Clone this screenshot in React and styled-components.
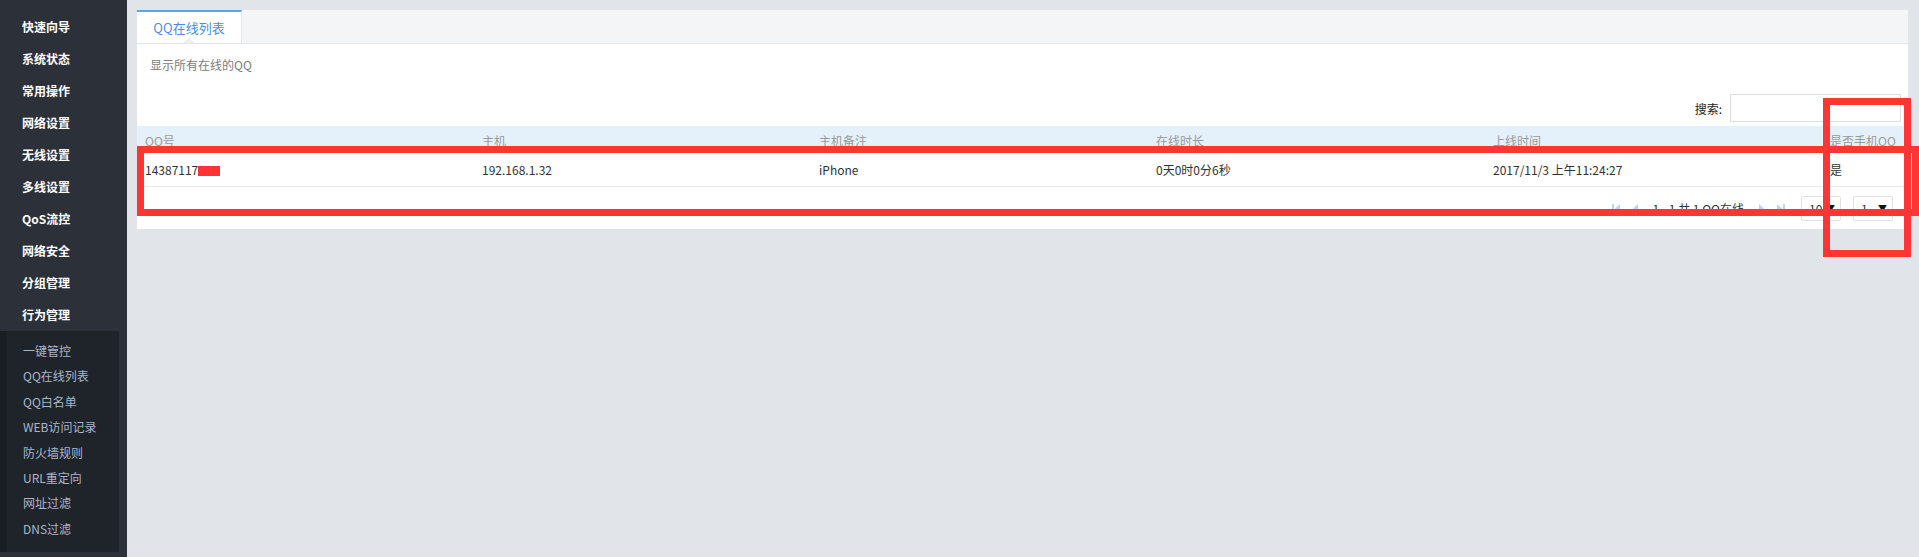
import React from 'react';
import styled, { createGlobalStyle } from 'styled-components';

const GlobalStyle = createGlobalStyle`
  html, body { margin: 0; padding: 0; }
  body {
    font-family: "Noto Sans CJK SC", "Noto Sans", "Liberation Sans", sans-serif;
    font-size: 12px;
    background: #e1e4e8;
    color: #333;
  }
`;

const Page = styled.div`
  position: relative;
  display: flex;
  height: 557px;
  overflow: hidden;
`;

const Sidebar = styled.nav`
  width: 127px;
  flex: none;
  background: #2b3039;
  padding-top: 11px;
  box-sizing: border-box;
`;

const NavItem = styled.div`
  height: 32px;
  line-height: 32px;
  padding-left: 22px;
  color: #fff;
  font-size: 12px;
  font-weight: 700;
`;

const SubMenu = styled.div`
  width: 112px;
  border-left: 7px solid #1a1d21;
  background: #1f232a;
  padding: 7px 0 11px;
`;

const SubItem = styled.div`
  height: 25.4px;
  line-height: 25.4px;
  padding-left: 16px;
  color: #a9b7ca;
  font-size: 12px;
  white-space: nowrap;
`;

const Main = styled.main`
  flex: 1;
  padding: 10px 11px 0 10px;
  min-width: 0;
`;

const Panel = styled.section`
  background: #fff;
`;

const TabBar = styled.div`
  display: flex;
  height: 34px;
  background: #f4f5f7;
  border-bottom: 1px solid #e3e5e8;
  box-sizing: border-box;
`;

const Tab = styled.div`
  position: relative;
  width: 105px;
  box-sizing: border-box;
  background: #fff;
  border-top: 2px solid #5ca7ea;
  border-right: 1px solid #e3e5e8;
  color: #4a8ee0;
  font-size: 13px;
  text-align: center;
  line-height: 31px;

  &::after {
    content: "";
    position: absolute;
    left: 50%;
    bottom: 0;
    margin-left: -6px;
    border-left: 6px solid transparent;
    border-right: 6px solid transparent;
    border-bottom: 5px solid #eceef1;
  }
`;

const Desc = styled.div`
  padding: 13px 13px 0;
  line-height: 16px;
  color: #7b7b7b;
`;

const Toolbar = styled.div`
  display: flex;
  justify-content: flex-end;
  align-items: center;
  gap: 8px;
  margin-top: 21px;
  padding-right: 7px;
`;

const Label = styled.span`
  color: #222;
`;

const SearchInput = styled.input`
  width: 171px;
  height: 28px;
  box-sizing: border-box;
  border: 1px solid #dcdfe4;
  outline: none;
  font: inherit;
  padding: 0 6px;
`;

const Table = styled.div`
  margin-top: 4px;
`;

const Row = styled.div`
  display: grid;
  grid-template-columns: repeat(5, 1fr) 86px;
`;

const HeadRow = styled(Row)`
  height: 25px;
  align-items: end;
  background: #e5f1fa;
`;

const HeadCell = styled.div`
  padding-left: 8px;
  line-height: 20px;
  color: #999;
  white-space: nowrap;
`;

const DataRow = styled(Row)`
  height: 35px;
  border-bottom: 1px solid #ececec;
`;

const Cell = styled.div`
  padding: 3px 0 0 8px;
  line-height: 32px;
  color: #333;
  white-space: nowrap;
`;

const Redact = styled.span`
  display: inline-block;
  width: 22px;
  height: 10px;
  background: #ff3333;
  vertical-align: -1px;
`;

const Pager = styled.div`
  display: flex;
  justify-content: flex-end;
  align-items: center;
  height: 42px;
  padding-right: 15px;
  gap: 12px;
`;

const PageIcon = styled.svg`
  width: 8px;
  height: 9px;
  fill: #c3d3e8;
  flex: none;
`;

const PageText = styled.span`
  color: #333;
  white-space: nowrap;
  margin: 0 1px;
`;

const Selects = styled.div`
  display: flex;
  gap: 12px;
  margin-left: 4px;
`;

const Select = styled.div`
  width: 40px;
  height: 25px;
  box-sizing: border-box;
  border: 1px solid #dfe2e6;
  border-radius: 2px;
  display: flex;
  align-items: center;
  justify-content: space-between;
  padding: 0 5px 0 7px;
  color: #333;
`;

const Caret = styled.span`
  font-size: 9px;
  color: #111;
`;

const Mark = styled.div`
  position: absolute;
  box-sizing: border-box;
  border: 7px solid #fd3535;
  pointer-events: none;
`;

const navItems = ['快速向导', '系统状态', '常用操作', '网络设置', '无线设置', '多线设置', 'QoS流控', '网络安全', '分组管理', '行为管理'];
const subItems = ['一键管控', 'QQ在线列表', 'QQ白名单', 'WEB访问记录', '防火墙规则', 'URL重定向', '网址过滤', 'DNS过滤'];
const heads = ['QQ号', '主机', '主机备注', '在线时长', '上线时间', '是否手机QQ'];

export default function App() {
  return (
    <Page>
      <GlobalStyle />
      <Sidebar>
        {navItems.map((n) => <NavItem key={n}>{n}</NavItem>)}
        <SubMenu>
          {subItems.map((n) => <SubItem key={n}>{n}</SubItem>)}
        </SubMenu>
      </Sidebar>
      <Main>
        <Panel>
          <TabBar>
            <Tab>QQ在线列表</Tab>
          </TabBar>
          <Desc>显示所有在线的QQ</Desc>
          <Toolbar>
            <Label>搜索:</Label>
            <SearchInput />
          </Toolbar>
          <Table>
            <HeadRow>
              {heads.map((h) => <HeadCell key={h}>{h}</HeadCell>)}
            </HeadRow>
            <DataRow>
              <Cell>14387117<Redact /></Cell>
              <Cell>192.168.1.32</Cell>
              <Cell>iPhone</Cell>
              <Cell>0天0时0分6秒</Cell>
              <Cell>2017/11/3 上午11:24:27</Cell>
              <Cell>是</Cell>
            </DataRow>
          </Table>
          <Pager>
            <PageIcon viewBox="0 0 8 9"><rect x="0" y="0" width="2" height="9" /><path d="M8 0 L3 4.5 L8 9 Z" /></PageIcon>
            <PageIcon viewBox="0 0 8 9"><path d="M6 0 L1 4.5 L6 9 Z" /></PageIcon>
            <PageText>1 - 1 共 1 QQ在线</PageText>
            <PageIcon viewBox="0 0 8 9"><path d="M2 0 L7 4.5 L2 9 Z" /></PageIcon>
            <PageIcon viewBox="0 0 8 9"><path d="M0 0 L5 4.5 L0 9 Z" /><rect x="6" y="0" width="2" height="9" /></PageIcon>
            <Selects>
              <Select><span>10</span><Caret>▼</Caret></Select>
              <Select><span>1</span><Caret>▼</Caret></Select>
            </Selects>
          </Pager>
        </Panel>
      </Main>
      <Mark style={{ left: 137, top: 146, width: 1782, height: 70 }} />
      <Mark style={{ left: 1823, top: 98, width: 88, height: 159 }} />
    </Page>
  );
}
